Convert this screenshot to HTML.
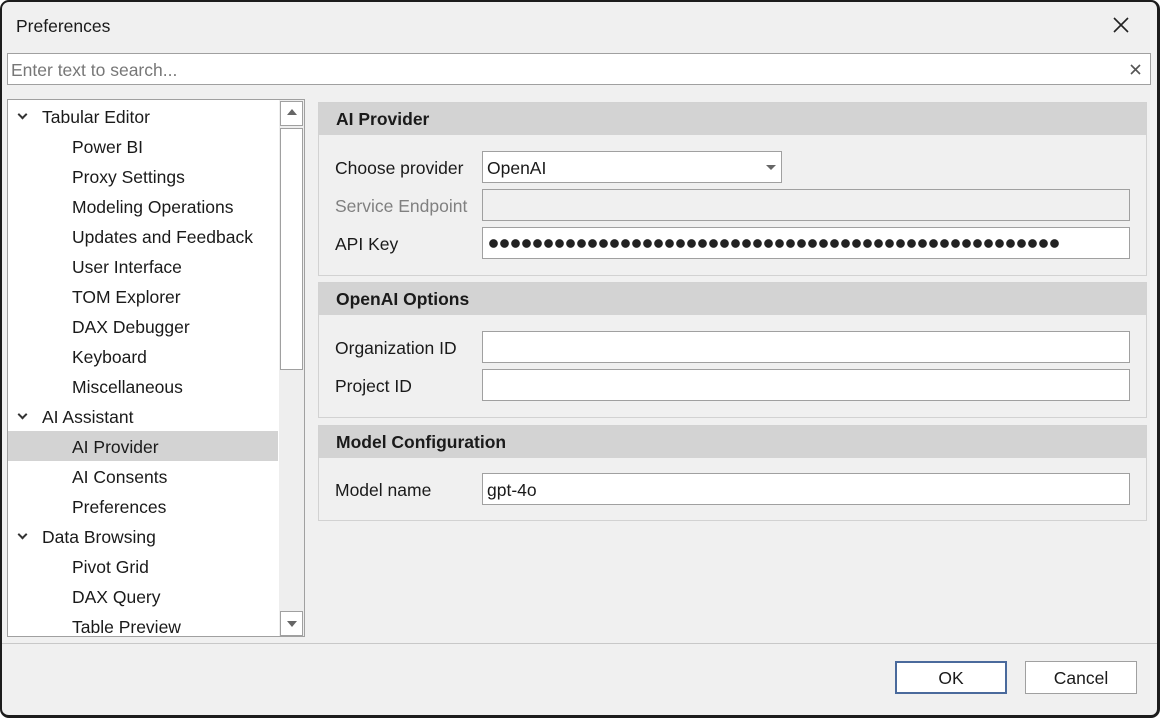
<!DOCTYPE html>
<html><head><meta charset="utf-8"><style>
*{box-sizing:border-box;margin:0;padding:0}
body{width:1160px;height:718px;background:#fff;font-family:"Liberation Sans",sans-serif;font-size:17.5px;color:#1a1a1a;position:relative;overflow:hidden}
.win{position:absolute;left:0;top:0;width:1160px;height:718px;background:#f0f0f0;border:2px solid #1c1c1c;border-right-width:3px;border-bottom-width:3px;border-radius:9px;overflow:hidden}
.a{position:absolute}
.t{position:absolute;white-space:nowrap;line-height:20px}
.box{position:absolute;background:#fff;border:1px solid #a0a0a0}
.grp{position:absolute;border:1px solid #d2d2d2;background:#f0f0f0}
.gh{position:absolute;left:0;top:0;right:0;height:32px;background:#d3d3d3;font-weight:bold;padding-left:17px;line-height:33px}
.chev{position:absolute;width:7px;height:7px;border-right:2px solid #333;border-bottom:2px solid #333;transform:rotate(45deg)}
</style></head><body><div class="win">
<div class="t" style="left:14px;top:14px">Preferences</div>
<svg class="a" style="left:1110px;top:14px" width="18" height="18"><path d="M2 2L16 16M16 2L2 16" stroke="#222" stroke-width="1.6"/></svg>
<div class="box" style="left:5px;top:51px;width:1144px;height:32px"></div>
<div class="t" style="left:9px;top:58px;color:#777">Enter text to search...</div>
<svg class="a" style="left:1128px;top:62px" width="11" height="11"><path d="M1 1L10 10M10 1L1 10" stroke="#555" stroke-width="1.6"/></svg>

<div class="box" style="left:5px;top:97px;width:298px;height:538px"></div>
<div class="a" style="left:277px;top:98px;width:25px;height:536px;background:#eee"></div>
<div class="a" style="left:278px;top:99px;width:23px;height:25px;background:#fff;border:1px solid #a0a0a0"></div>
<svg class="a" style="left:284px;top:106px" width="12" height="8"><path d="M1 7L6 1L11 7Z" fill="#666"/></svg>
<div class="a" style="left:278px;top:126px;width:23px;height:242px;background:#fff;border:1px solid #a0a0a0"></div>
<div class="a" style="left:278px;top:609px;width:23px;height:25px;background:#fff;border:1px solid #a0a0a0"></div>
<svg class="a" style="left:284px;top:618px" width="12" height="8"><path d="M1 1L6 7L11 1Z" fill="#666"/></svg>
<div class="a" style="left:6px;top:429px;width:270px;height:30px;background:#d3d3d3"></div>
<div class="chev" style="left:17px;top:109px"></div>
<div class="chev" style="left:17px;top:409px"></div>
<div class="chev" style="left:17px;top:529px"></div>
<div class="t" style="left:40px;top:105px">Tabular Editor</div>
<div class="t" style="left:70px;top:135px">Power BI</div>
<div class="t" style="left:70px;top:165px">Proxy Settings</div>
<div class="t" style="left:70px;top:195px">Modeling Operations</div>
<div class="t" style="left:70px;top:225px">Updates and Feedback</div>
<div class="t" style="left:70px;top:255px">User Interface</div>
<div class="t" style="left:70px;top:285px">TOM Explorer</div>
<div class="t" style="left:70px;top:315px">DAX Debugger</div>
<div class="t" style="left:70px;top:345px">Keyboard</div>
<div class="t" style="left:70px;top:375px">Miscellaneous</div>
<div class="t" style="left:40px;top:405px">AI Assistant</div>
<div class="t" style="left:70px;top:435px">AI Provider</div>
<div class="t" style="left:70px;top:465px">AI Consents</div>
<div class="t" style="left:70px;top:495px">Preferences</div>
<div class="t" style="left:40px;top:525px">Data Browsing</div>
<div class="t" style="left:70px;top:555px">Pivot Grid</div>
<div class="t" style="left:70px;top:585px">DAX Query</div>
<div class="t" style="left:70px;top:615px;height:18px;overflow:hidden">Table Preview</div>

<div class="grp" style="left:316px;top:100px;width:829px;height:174px"><div class="gh">AI Provider</div></div>
<div class="t" style="left:333px;top:156px">Choose provider</div>
<div class="box" style="left:480px;top:149px;width:300px;height:32px"></div>
<div class="t" style="left:485px;top:156px">OpenAI</div>
<svg class="a" style="left:764px;top:163px" width="10" height="6"><path d="M0 0L10 0L5 5Z" fill="#666"/></svg>
<div class="t" style="left:333px;top:194px;color:#808080">Service Endpoint</div>
<div class="box" style="left:480px;top:187px;width:648px;height:32px;background:#f0f0f0"></div>
<div class="t" style="left:333px;top:232px">API Key</div>
<div class="box" style="left:480px;top:225px;width:648px;height:32px"></div>
<div class="a" style="left:486px;top:236px;width:572px;height:11px;background:radial-gradient(circle at 5.5px 5.5px,#222 4px,transparent 4.6px);background-size:11px 11px;background-repeat:repeat-x"></div>

<div class="grp" style="left:316px;top:280px;width:829px;height:136px"><div class="gh">OpenAI Options</div></div>
<div class="t" style="left:333px;top:336px">Organization ID</div>
<div class="box" style="left:480px;top:329px;width:648px;height:32px"></div>
<div class="t" style="left:333px;top:374px">Project ID</div>
<div class="box" style="left:480px;top:367px;width:648px;height:32px"></div>

<div class="grp" style="left:316px;top:423px;width:829px;height:96px"><div class="gh">Model Configuration</div></div>
<div class="t" style="left:333px;top:478px">Model name</div>
<div class="box" style="left:480px;top:471px;width:648px;height:32px"></div>
<div class="t" style="left:485px;top:478px">gpt-4o</div>

<div class="a" style="left:0;top:641px;width:1160px;height:1px;background:#c8c8c8"></div>
<div class="a" style="left:893px;top:659px;width:112px;height:33px;background:#fff;border:2px solid #4a6a9c"></div>
<div class="t" style="left:893px;top:666px;width:112px;text-align:center">OK</div>
<div class="box" style="left:1023px;top:659px;width:112px;height:33px"></div>
<div class="t" style="left:1023px;top:666px;width:112px;text-align:center">Cancel</div>
</div></body></html>
